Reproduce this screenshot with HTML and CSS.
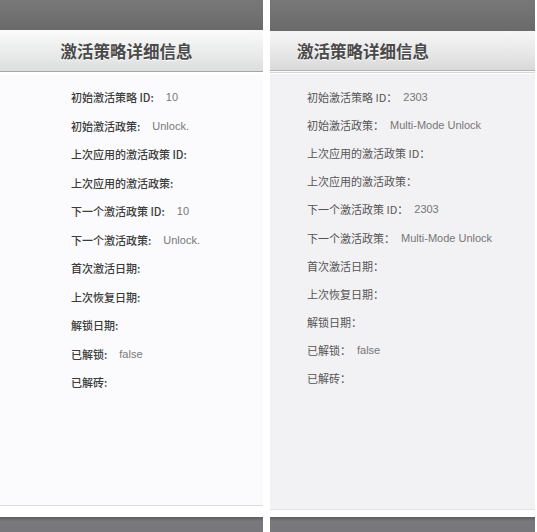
FILE: index.html
```html
<!DOCTYPE html>
<html>
<head>
<meta charset="utf-8">
<link rel="stylesheet" href="styles.css">
</head>
<body>
<div class="screens">
  <div class="panel panel-a">
    <div class="topbar"></div>
    <div class="header"><h1>激活策略详细信息</h1></div>
    <div class="content">
      <div class="row"><span class="label">初始激活策略 ID:</span><span class="value">10</span></div>
      <div class="row"><span class="label">初始激活政策:</span><span class="value">Unlock.</span></div>
      <div class="row"><span class="label">上次应用的激活政策 ID:</span></div>
      <div class="row"><span class="label">上次应用的激活政策:</span></div>
      <div class="row"><span class="label">下一个激活政策 ID:</span><span class="value">10</span></div>
      <div class="row"><span class="label">下一个激活政策:</span><span class="value">Unlock.</span></div>
      <div class="row"><span class="label">首次激活日期:</span></div>
      <div class="row"><span class="label">上次恢复日期:</span></div>
      <div class="row"><span class="label">解锁日期:</span></div>
      <div class="row"><span class="label">已解锁:</span><span class="value">false</span></div>
      <div class="row"><span class="label">已解砖:</span></div>
    </div>
    <div class="footer"></div>
    <div class="bottombar"></div>
  </div>
  <div class="panel panel-b">
    <div class="topbar"></div>
    <div class="header"><h1>激活策略详细信息</h1></div>
    <div class="content">
      <div class="row"><span class="label">初始激活策略 ID：</span><span class="value">2303</span></div>
      <div class="row"><span class="label">初始激活政策：</span><span class="value">Multi-Mode Unlock</span></div>
      <div class="row"><span class="label">上次应用的激活政策 ID：</span></div>
      <div class="row"><span class="label">上次应用的激活政策：</span></div>
      <div class="row"><span class="label">下一个激活政策 ID：</span><span class="value">2303</span></div>
      <div class="row"><span class="label">下一个激活政策：</span><span class="value">Multi-Mode Unlock</span></div>
      <div class="row"><span class="label">首次激活日期：</span></div>
      <div class="row"><span class="label">上次恢复日期：</span></div>
      <div class="row"><span class="label">解锁日期：</span></div>
      <div class="row"><span class="label">已解锁：</span><span class="value">false</span></div>
      <div class="row"><span class="label">已解砖：</span></div>
    </div>
    <div class="footer"></div>
    <div class="bottombar"></div>
  </div>
</div>
</body>
</html>
```

FILE: styles.css
```css
* {
  box-sizing: border-box;
}

body {
  margin: 0;
  background: #fff;
  font-family: "Liberation Sans", "Noto Sans CJK SC", sans-serif;
}

.screens {
  display: flex;
  gap: 7px;
  height: 532px;
}

.panel {
  display: flex;
  flex-direction: column;
  height: 532px;
}

.panel-a {
  width: 263px;
  background: #fbfbfd;
}

.panel-b {
  width: 265px;
  background: #f2f1f3;
}

.topbar {
  height: 30px;
  background: linear-gradient(#787878, #6a6a6a);
}

.panel-b .topbar {
  height: 31px;
}

.header {
  height: 42px;
  display: flex;
  align-items: center;
  background: linear-gradient(#fbfbfb, #e9eaea 60%, #dcdede);
  border-bottom: 1px solid #a4a6a6;
  box-shadow: 0 1px 0 #fff, 0 3px 0 #fff;
}

.panel-b .header {
  height: 40px;
  background: linear-gradient(#f6f6f6, #e6e6e6 60%, #d9d9d9);
  border-bottom: 1px solid #b3b3b3;
  box-shadow: 0 1px 0 #fafafa, 0 2px 0 #d6d6d6, 0 3px 0 #fff;
}

h1 {
  margin: 0;
  font-family: "Noto Sans CJK SC", sans-serif;
  font-size: 16.5px;
  font-weight: 700;
  color: #4a4a4a;
  text-shadow: 0 1px 0 #fff;
}

.panel-a h1 {
  width: 100%;
  text-align: center;
  padding-right: 10px;
}

.panel-b h1 {
  padding-left: 27px;
}

.content {
  flex: 1;
  padding-top: 11px;
  font-size: 11px;
}

.panel-a .content {
  padding-left: 71px;
}

.panel-b .content {
  padding-top: 12px;
  padding-left: 37px;
}

.row {
  height: 28.5px;
  display: flex;
  align-items: center;
}

.panel-b .row {
  height: 28.1px;
}

.label {
  font-family: "Noto Sans CJK SC", sans-serif;
  color: #3c3c3c;
  font-weight: 500;
}

.panel-b .label {
  color: #555;
  font-weight: 400;
}

.value {
  color: #777;
  margin-left: 12px;
}

.panel-b .value {
  margin-left: 6px;
}

.footer {
  height: 12px;
  background: #fff;
  border-top: 1px solid #dddde0;
}

.panel-b .footer {
  height: 8px;
  border-top: 1px solid #e2e2e4;
}

.bottombar {
  height: 15px;
  background: linear-gradient(#5e5e60, #79787c 30%, #78777b);
}
```
